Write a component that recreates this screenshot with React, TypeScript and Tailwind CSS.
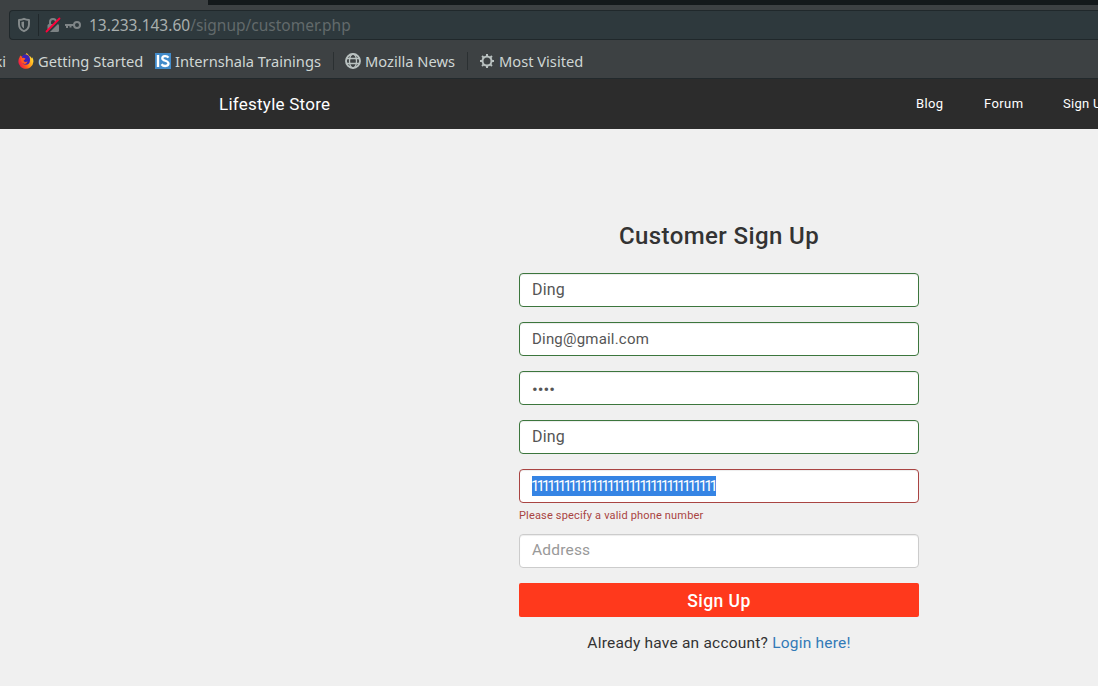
import type { ReactNode } from "react";

function ShieldIcon() {
  return (
    <svg className="h-4 w-4 shrink-0" viewBox="0 0 16 16" fill="none">
      <path d="M8 1.800c1.700.8 3.400 1.100 5 1.200v4.200c0 3.500-2 5.800-5 7-3-1.200-5-3.500-5-7V3c1.600-.1 3.300-.4 5-1.200z" stroke="#858b8c" strokeWidth="1.900" strokeLinejoin="round" />
      <path d="M8 4.500v7c-1.600-.9-2.500-2.300-2.500-4.300V5z" fill="#858b8c" />
    </svg>
  );
}

function InsecureIcon() {
  return (
    <svg className="h-4 w-4 shrink-0" viewBox="0 0 16 16" fill="none">
      <path d="M5 8V5a3 3 0 0 1 6 0v3" stroke="#7c8284" strokeWidth="2" />
      <rect x="2.500" y="7" width="11.500" height="8" rx="1.500" fill="#7c8284" />
      <path d="M3 15.200 14.800 3.400" stroke="#2e393d" strokeWidth="2.500" />
      <path d="M1.500 14.500 14.500 1.500" stroke="#ff0039" strokeWidth="1.800" strokeLinecap="round" />
    </svg>
  );
}

function KeyIcon() {
  return (
    <svg className="h-4 w-4 shrink-0" viewBox="0 0 16 16" fill="none">
      <circle cx="12" cy="8" r="3" stroke="#7f8587" strokeWidth="2" />
      <path d="M9 8H0M2 8v3M5.500 8v2.500" stroke="#7f8587" strokeWidth="2" />
    </svg>
  );
}

function FirefoxIcon() {
  return (
    <svg className="h-4 w-4 shrink-0" viewBox="0 0 16 16">
      <defs>
        <linearGradient id="flame" x1="1" y1="0.200" x2="0" y2="0.700">
          <stop offset="0" stopColor="#fff04a" />
          <stop offset=".3" stopColor="#ffb41f" />
          <stop offset=".65" stopColor="#ff5a1c" />
          <stop offset="1" stopColor="#ee1450" />
        </linearGradient>
      </defs>
      <path d="M8.500 0c1.400 1 2 1.800 2.400 2.800 1.500.5 2.400 1.500 2.800 2.600l.5-1.200c1 1.500 1.300 3 1.200 4.500A7.500 7.500 0 1 1 1.700 4.100l.4-1.600 1.500 1.100C5.300 3 6.500 3 7.200 3.200 7.300 1.900 7.700.9 8.500 0z" fill="url(#flame)" />
      <path d="M4 3.400C5.500 1.300 9 .8 11 3.200c1.500 2 1.400 5.800-.3 7.500-1.600 1.400-4.600 1.300-5.800-.2z" fill="#3b22b8" />
      <path d="M3 5.300c1.600-1 3.500-.8 4.500.4L6.300 7c-.7.300-.8 1-.2 1.500 1 .6 2.300.7 3.400-.2-.3 2.200-2 3.100-3.700 2.500-2-.6-3.300-3.300-2.800-5.500z" fill="#ff5a24" />
    </svg>
  );
}

function InternshalaIcon() {
  return (
    <svg className="h-4 w-4 shrink-0" viewBox="0 0 16 16" fill="none">
      <rect width="16" height="16" fill="#428bca" />
      <path d="M3 2v12" stroke="#fff" strokeWidth="2.400" />
      <path d="M13.500 4.600C12 2.400 7.300 2.500 7.300 5.200c0 3.200 6.200 1.900 6.200 5.400 0 3-5.100 3.100-7 .6" stroke="#fff" strokeWidth="2.300" />
    </svg>
  );
}

function GlobeIcon() {
  return (
    <svg className="h-4 w-4 shrink-0" viewBox="0 0 16 16" fill="none" stroke="#b9c1c0">
      <circle cx="8" cy="8" r="7" strokeWidth="1.900" />
      <ellipse cx="8" cy="8" rx="3.500" ry="7" strokeWidth="1.300" />
      <path d="M1.500 5.500h13M1.500 10.500h13" strokeWidth="1.300" />
    </svg>
  );
}

function GearIcon() {
  return (
    <svg className="h-4 w-4 shrink-0" viewBox="0 0 16 16" fill="none" stroke="#b9c1c0">
      <circle cx="8" cy="8" r="4.500" strokeWidth="2" />
      <path d="M8 1v2.500M8 12.500V15M1 8h2.500M12.500 8H15M3.050 3.050l1.600 1.600M11.350 11.350l1.600 1.600M3.050 12.950l1.600-1.600M11.350 4.650l1.600-1.600" strokeWidth="2" />
    </svg>
  );
}

function Field({ children, tone = "border-[#3c763d]" }: { children: ReactNode; tone?: string }) {
  return (
    <div className={`flex h-[34px] items-center rounded border bg-white px-3 text-[15px] tracking-[0.200px] text-[#555] shadow-[inset_0_1px_1px_rgba(0,0,0,.075)] ${tone}`}>
      {children}
    </div>
  );
}

export default function App() {
  return (
    <div className="flex h-[686px] w-full flex-col overflow-hidden bg-[#f0f0f0] font-['Roboto',sans-serif]">
      <header className="h-[79px] shrink-0 border-b border-[#22292c] bg-[#3d4143] font-['Noto_Sans',sans-serif]">
        <div className="ml-[208px] h-[5px] bg-[#14191b]" />
        <div className="mt-[5px] ml-[9px] flex h-[30px] items-center rounded-l border border-r-0 border-[#20282b] bg-[#2e393d] pl-[6px]">
          <ShieldIcon />
          <div className="mr-[6px] ml-[6px] h-[22px] w-px bg-[#20282b]" />
          <InsecureIcon />
          <div className="w-[4px]" />
          <KeyIcon />
          <span className="ml-[8px] pt-[2px] text-[15.500px] whitespace-nowrap text-[#626a6b]">
            <span className="text-[#a9afae]">13.233.143.60</span>/signup/customer.php
          </span>
        </div>
        <div className="flex h-[38px] items-center pt-[4px] text-[14.670px] whitespace-nowrap text-[#cfd6d4]">
          <span className="flex w-[6px] shrink-0 justify-end overflow-hidden">ki</span>
          <span className="ml-[12px] flex w-[137px] items-center gap-[4px]"><FirefoxIcon /><span>Getting Started</span></span>
          <span className="flex w-[178px] items-center gap-[4px]"><InternshalaIcon /><span>Internshala Trainings</span></span>
          <div className="h-[18px] w-px bg-[#2b3032]" />
          <span className="ml-[11px] flex w-[122px] items-center gap-[4px]"><GlobeIcon /><span>Mozilla News</span></span>
          <div className="h-[18px] w-px bg-[#2b3032]" />
          <span className="ml-[11px] flex items-center gap-[4px]"><GearIcon /><span>Most Visited</span></span>
        </div>
      </header>
      <nav className="flex h-[50px] shrink-0 items-center overflow-hidden bg-[#2c2c2c] pl-[219px] whitespace-nowrap text-white">
        <span className="w-[697px] shrink-0 pt-[2px] text-[17px] tracking-[0.250px]">Lifestyle Store</span>
        <span className="w-[68px] shrink-0 text-[13px] tracking-[0.400px]">Blog</span>
        <span className="w-[79px] shrink-0 text-[13px] tracking-[0.400px]">Forum</span>
        <span className="shrink-0 text-[13px] tracking-[0.300px]">Sign Up</span>
      </nav>
      <main className="ml-[519px] flex w-[400px] flex-col pt-[90px] whitespace-nowrap">
        <h1 className="h-[54px] text-center text-[24px] leading-[34px] font-medium tracking-[0.400px] text-[#333]">Customer Sign Up</h1>
        <div className="flex flex-col gap-[15px]">
          <Field><span className="text-[16px] tracking-[0.200px]">Ding</span></Field>
          <Field>Ding@gmail.com</Field>
          <Field><span className="pt-[3px] text-[17px] tracking-[0px]">••••</span></Field>
          <Field><span className="text-[16px] tracking-[0.200px]">Ding</span></Field>
        </div>
        <div className="mt-[15px] h-[65px]">
          <Field tone="border-[#a94442]">
            <span className="h-5 w-[184px] bg-[#3584e4] indent-[-1px] leading-5 tracking-[-3.020px] text-white">1111111111111111111111111111111111</span>
          </Field>
          <p className="pt-[5px] text-[11px] leading-[16px] tracking-[0.170px] text-[#a94442]">Please specify a valid phone number</p>
        </div>
        <Field tone="border-[#ccc]"><span className="text-[15.500px] tracking-[0.200px] text-[#999]">Address</span></Field>
        <button className="mt-[15px] h-[34px] rounded-[2px] bg-[#ff391c] pt-[3px] text-[17.500px] font-medium tracking-[0.450px] text-white">Sign Up</button>
        <p className="mt-[15px] text-center text-[15.500px] leading-[22px] tracking-[0.210px] text-[#333]">Already have an account? <a className="text-[#337ab7]">Login here!</a></p>
      </main>
    </div>
  );
}
